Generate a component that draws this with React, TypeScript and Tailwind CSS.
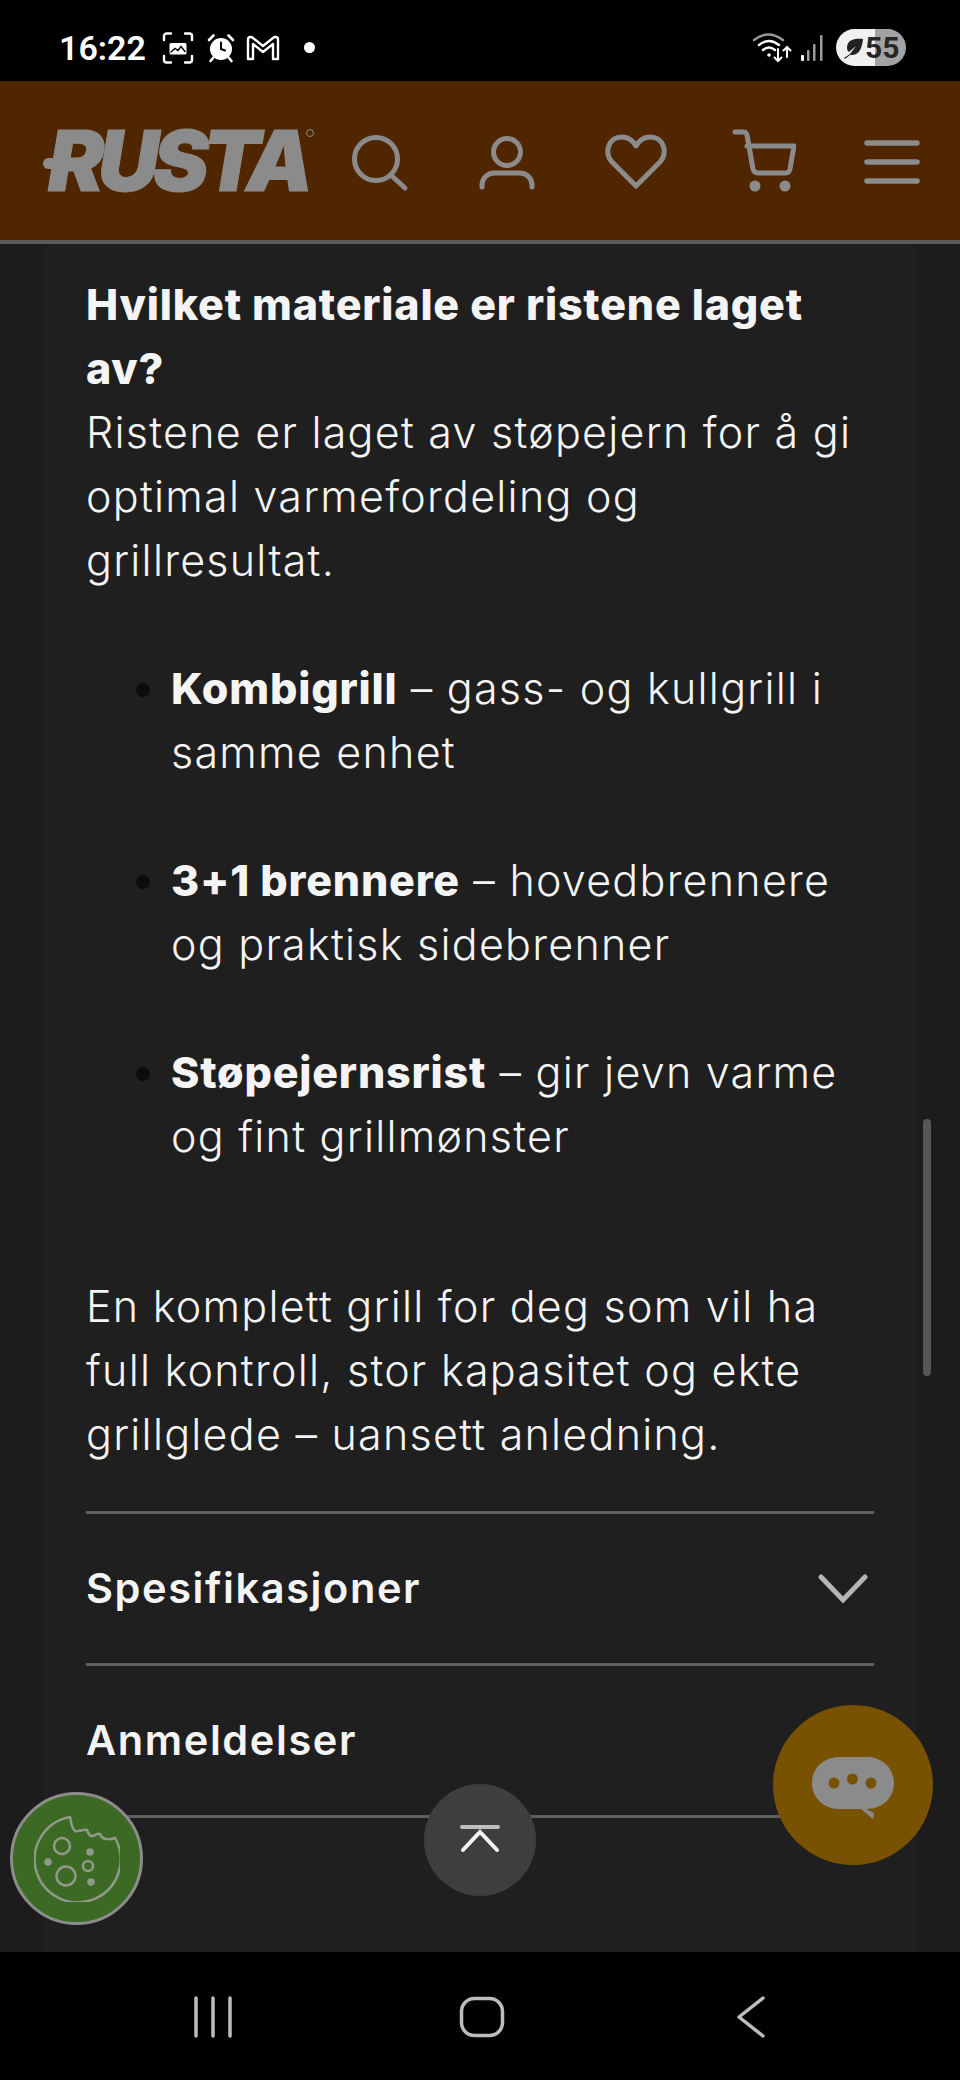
const GRAY = "#8b8b8b";

function HeaderIcon({ children, className = "" }: { children: React.ReactNode; className?: string }) {
  return (
    <div className={`flex h-full w-[128px] items-center justify-center ${className}`}>
      <svg width="64" height="64" viewBox="0 0 64 64" fill="none" stroke={GRAY} strokeWidth="5" strokeLinecap="round" strokeLinejoin="round">
        {children}
      </svg>
    </div>
  );
}

function StatusBar() {
  return (
    <div className="flex h-[81px] shrink-0 items-center justify-between bg-black pl-[59px] pr-[54px] pt-[14px]">
      <div className="flex items-center">
        <span className="w-[87px] text-[34px] font-semibold leading-none text-white [font-family:Roboto,sans-serif]">16:22</span>
        <svg className="ml-[16px]" width="32" height="32" viewBox="0 0 32 32" fill="none" stroke="#fff" strokeWidth="2.4" strokeLinecap="round">
          <path d="M2 8V4a2.5 2.5 0 0 1 2.5-2.5H9M23 1.5h4.5A2.5 2.5 0 0 1 30 4v4M30 24v4a2.5 2.5 0 0 1-2.5 2.5H23M9 30.5H4.500A2.500 2.500 0 0 1 2 28v-4" />
          <path d="M9 11h14a1.500 1.500 0 0 1 1.500 1.500V21a1.500 1.500 0 0 1-1.500 1.500H9A1.500 1.500 0 0 1 7.500 21v-8.500A1.500 1.500 0 0 1 9 11Z" fill="#fff" stroke="none" />
          <path d="M9 20l4-3.500 3 2 3-4 4 5" stroke="#000" strokeWidth="1.400" />
        </svg>
        <svg className="ml-[13px]" width="28" height="30" viewBox="0 0 28 30" fill="none" stroke="#fff" strokeLinecap="round">
          <circle cx="14" cy="16" r="11" fill="#fff" stroke="none" />
          <path d="M14 9.500V16l4 1.500" stroke="#000" strokeWidth="2" />
          <path d="M2 7l4.500-4.500M26 7l-4.500-4.500M6 25l-2.500 3M22 25l2.500 3" strokeWidth="2.600" />
        </svg>
        <svg className="ml-[11px]" width="34" height="26" viewBox="0 0 34 26" fill="none" stroke="#fff" strokeWidth="2.400" strokeLinejoin="round">
          <path d="M2 24V4.500Q2 2 4.500 2Q6 2 7 3L17 11L27 3Q28 2 29.500 2Q32 2 32 4.500V24H27V9L17 17L7 9V24Z" />
        </svg>
        <span className="ml-[24px] h-[11px] w-[11px] rounded-full bg-white" />
      </div>
      <div className="flex items-center">
        <svg width="40" height="32" viewBox="0 0 40 32" fill="none" stroke="#fff" strokeWidth="2.400" strokeLinecap="round">
          <path d="M2 8Q16 -3 31 8" stroke="#9a9a9a" />
          <path d="M7 13Q17 5 27 13" />
          <path d="M11 18Q17 13 23 18" />
          <circle cx="17" cy="23" r="1.800" fill="#fff" stroke="none" />
          <path d="M26 17v12M22.500 25.500l3.500 3.500 3.500-3.500M35 25V15M31.500 18.500l3.500-3.500 3.500 3.500" strokeWidth="2" />
        </svg>
        <svg className="ml-[8px]" width="26" height="28" viewBox="0 0 26 28" fill="#9a9a9a">
          <rect x="1" y="21" width="3" height="6" rx="1" fill="#fff" />
          <rect x="7" y="16" width="2.500" height="11" rx="1" />
          <rect x="13" y="10" width="2.500" height="17" rx="1" />
          <rect x="20" y="1" width="2.500" height="26" rx="1" />
        </svg>
        <div className="ml-[10px] flex h-[37px] w-[70px] items-center rounded-full bg-[linear-gradient(90deg,#f0f0f0_56%,#a2a2a2_56%)] pl-[6px]">
          <svg width="22" height="22" viewBox="0 0 22 22" fill="#222">
            <path d="M21 2C12 1 5 3 5 11c0 2 1 3 2 4l7-6-6 8-6 4 1 1 5-4c8 1 12-5 13-16Z" />
          </svg>
          <span className="ml-[1px] text-[30px] font-bold leading-none text-[#262626] [font-family:Roboto,sans-serif]">55</span>
        </div>
      </div>
    </div>
  );
}

function Header() {
  return (
    <header className="flex h-[163px] shrink-0 items-center border-b-[4px] border-[#5a5a5a] bg-[#502600] pl-[43px]">
      <div className="relative flex h-full w-[270px] items-center">
        <span className="ml-[5px] text-[84px] font-black italic leading-none tracking-[-6px] text-[#8b8b8b] [font-family:Inter,sans-serif] [-webkit-text-stroke:1px_#8b8b8b]">RUSTA</span>
        <span className="absolute left-0 top-[77px] h-[11px] w-[34px] rounded-full bg-[#8b8b8b]" />
        <span className="absolute left-[263px] top-[48px] h-[8px] w-[8px] rounded-full border border-[#8b8b8b]" />
      </div>
      <HeaderIcon>
        <circle cx="31" cy="30" r="21.500" />
        <path d="M47 47l13 12" />
      </HeaderIcon>
      <HeaderIcon className="ml-[2px]">
        <circle cx="32" cy="23" r="13.500" />
        <path d="M7 58v-2a12 12 0 0 1 12-12h26a12 12 0 0 1 12 12v2" />
      </HeaderIcon>
      <HeaderIcon className="ml-[1px]">
        <path d="M32 57 8 33C0 24 4 8 18 8c7 0 12 5 14 9 2-4 7-9 14-9 14 0 18 16 10 25Z" />
      </HeaderIcon>
      <HeaderIcon>
        <path d="M3 3h9q2 0 3 3l6 34q1 4 5 4h28q3 0 4-4l4-23H15" />
        <circle cx="23" cy="57" r="5.500" fill={GRAY} stroke="none" />
        <circle cx="53" cy="57" r="5.500" fill={GRAY} stroke="none" />
      </HeaderIcon>
      <HeaderIcon>
        <path d="M7 14h50M7 33h50M7 52h50" strokeWidth="5.500" />
      </HeaderIcon>
    </header>
  );
}

function Accordion({ title, chevron }: { title: string; chevron?: boolean }) {
  return (
    <div className="flex h-[152px] items-center justify-between border-t-[3px] border-[#5f5f5f] pr-[6px]">
      <span className="text-[41.500px] font-semibold leading-none tracking-[1.600px] text-[#f4f4f4]">{title}</span>
      {chevron && (
        <svg width="50" height="30" viewBox="0 0 50 30" fill="none" stroke="#b5b5b5" strokeWidth="5" strokeLinecap="round">
          <path d="M3 3l22 23L47 3" />
        </svg>
      )}
    </div>
  );
}

function Bullet({ lead, l1, l2 }: { lead: string; l1: string; l2: string }) {
  return (
    <li>
      <strong className="font-extrabold tracking-[0.800px]">{lead}</strong> {l1}
      <br />
      {l2}
    </li>
  );
}

function Overlays() {
  return (
    <>
      <div className="absolute left-[923px] top-[1119px] h-[257px] w-[8px] rounded-full bg-[#565656]" />

      <div className="absolute left-[10px] top-[1792px] flex h-[133px] w-[133px] items-center justify-center rounded-full border-[3px] border-[#8c8c8c] bg-[#3c6a24]">
        <svg width="86" height="86" viewBox="0 0 86 86" fill="none" stroke="#8f9a88" strokeWidth="2.500">
          <path d="M36 1C37 7 38 13 41 15C45 16 49 13 53 14C54 17 56 20 58 20C61 20 63 17 66 18C67 21 70 23 73 23C75 24 78 23 81 22A43 43 0 1 1 36 1Z" />
          <circle cx="28" cy="30" r="8" />
          <circle cx="32" cy="60" r="9.500" />
          <circle cx="54" cy="50" r="5" />
          <circle cx="14" cy="46" r="3.800" fill="#8f9a88" stroke="none" />
          <circle cx="56" cy="36" r="3.800" fill="#8f9a88" stroke="none" />
          <circle cx="57" cy="66" r="3.800" fill="#8f9a88" stroke="none" />
        </svg>
      </div>

      <div className="absolute left-[424px] top-[1784px] flex h-[112px] w-[112px] items-center justify-center rounded-full bg-[#3e3e3e]">
        <svg width="44" height="32" viewBox="0 0 44 32" fill="none" stroke="#f2f2f2" strokeWidth="4" strokeLinecap="round">
          <path d="M4 3h36" stroke="#bdbdbd" />
          <path d="M5 26 22 8l17 18" />
        </svg>
      </div>

      <div className="absolute left-[773px] top-[1705px] flex h-[160px] w-[160px] items-center justify-center rounded-full bg-[#785200]">
        <svg width="84" height="64" viewBox="0 0 84 64" className="mt-[6px]">
          <path d="M28 1h28c15 0 27 11 27 26S71 53 56 53h-1l8 4-1 6-12-10H28C13 53 1 42 1 27S13 1 28 1Z" fill="#8b8b8b" />
          <circle cx="23" cy="27" r="5.500" fill="#785200" />
          <circle cx="41.500" cy="23" r="5.500" fill="#785200" />
          <circle cx="60" cy="27" r="5.500" fill="#785200" />
        </svg>
      </div>
    </>
  );
}

function NavBar() {
  return (
    <nav className="flex h-[128px] shrink-0 items-center bg-black pl-[193px] pt-[2px]">
      <svg width="40" height="42" viewBox="0 0 40 42" fill="none" stroke="#bdbdbd" strokeWidth="3.500" strokeLinecap="round">
        <path d="M3 2v38M20 2v38M37 2v38" />
      </svg>
      <svg className="ml-[226px]" width="46" height="42" viewBox="0 0 46 42" fill="none" stroke="#bdbdbd" strokeWidth="3.500">
        <rect x="2.500" y="2.500" width="41" height="37" rx="13" />
      </svg>
      <svg className="ml-[231px]" width="30" height="44" viewBox="0 0 30 44" fill="none" stroke="#bdbdbd" strokeWidth="3.500" strokeLinecap="round" strokeLinejoin="round">
        <path d="M27 3 3 22l24 19" />
      </svg>
    </nav>
  );
}

export default function App() {
  return (
    <div className="relative flex h-[2080px] w-[960px] flex-col overflow-hidden bg-black">
      <StatusBar />
      <Header />
      <main className="flex-1 overflow-hidden bg-[#1c1c1c] px-[43px]">
        <div className="h-full bg-[#1f1f1f] px-[43px] pt-[28px] text-[43px] font-light leading-[64px] tracking-[1.250px] text-[#f4f4f4] [font-family:Inter,sans-serif]">
          <p className="whitespace-nowrap">
            <strong className="font-extrabold tracking-[0.800px]">Hvilket materiale er ristene laget</strong>
            <br />
            <strong className="font-extrabold tracking-[0.800px]">av?</strong>
            <br />
            Ristene er laget av støpejern for å gi
            <br />
            optimal varmefordeling og
            <br />
            grillresultat.
          </p>
          <ul className="mt-[64px] flex list-disc flex-col gap-[64px] whitespace-nowrap pl-[85px] marker:text-[#0c0c0c]">
            <Bullet lead="Kombigrill" l1="– gass- og kullgrill i" l2="samme enhet" />
            <Bullet lead="3+1 brennere" l1="– hovedbrennere" l2="og praktisk sidebrenner" />
            <Bullet lead="Støpejernsrist" l1="– gir jevn varme" l2="og fint grillmønster" />
          </ul>
          <p className="mt-[106px] mb-[45px] whitespace-nowrap">
            En komplett grill for deg som vil ha
            <br />
            full kontroll, stor kapasitet og ekte
            <br />
            grillglede – uansett anledning.
          </p>
          <Accordion title="Spesifikasjoner" chevron />
          <Accordion title="Anmeldelser" />
          <div className="border-t-[3px] border-[#5f5f5f]" />
        </div>
      </main>
      <NavBar />
      <Overlays />
    </div>
  );
}
